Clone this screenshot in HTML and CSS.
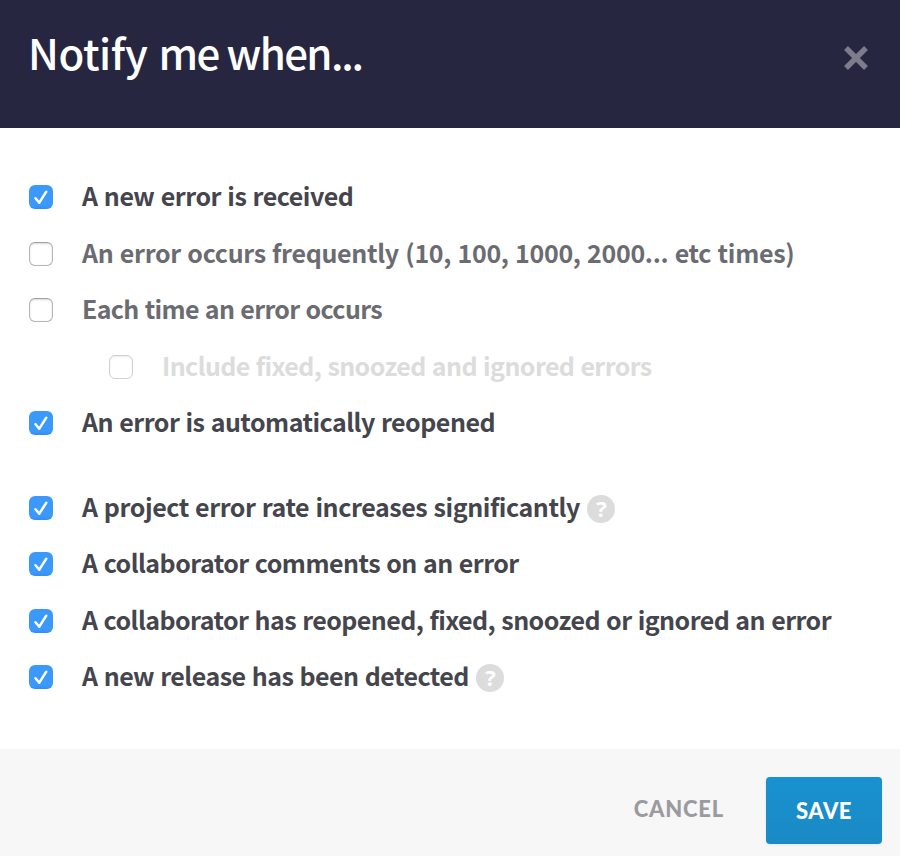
FILE: index.html
```html
<!DOCTYPE html>
<html lang="en">
<head>
<meta charset="utf-8">
<title>Notification settings</title>
<link rel="stylesheet" href="styles.css">
</head>
<body>
<svg class="defs" width="0" height="0" aria-hidden="true">
  <symbol id="tick" viewBox="0 0 24 24"><path d="M6.5 13.2 10.3 17.7 17.3 6.7" fill="none" stroke="#fff" stroke-width="2.5" stroke-linecap="round" stroke-linejoin="round"/></symbol>
</svg>
<div class="modal">
  <header class="header">
    <h1 class="title"><span class="lead">Notify </span>me when<span class="dots">...</span></h1>
    <svg class="close" viewBox="0 0 26 26"><path d="M3 3 23 23M23 3 3 23" fill="none" stroke="#7d7c8a" stroke-width="5.4"/></svg>
  </header>
  <main class="options">
    <label class="row on"><span class="box"><svg><use href="#tick"/></svg></span><span class="text t1">A new error is received</span></label>
    <label class="row"><span class="box"></span><span class="text t2">An error occurs frequently (10, 100, 1000, 2000... etc times)</span></label>
    <label class="row"><span class="box"></span><span class="text t3">Each time an error occurs</span></label>
    <label class="row sub"><span class="box"></span><span class="text t4">Include fixed, snoozed and ignored errors</span></label>
    <label class="row on"><span class="box"><svg><use href="#tick"/></svg></span><span class="text t5">An error is automatically reopened</span></label>
    <label class="row on group"><span class="box"><svg><use href="#tick"/></svg></span><span class="text t6">A project error rate increases significantly</span><span class="help">?</span></label>
    <label class="row on"><span class="box"><svg><use href="#tick"/></svg></span><span class="text t7">A collaborator comments on an error</span></label>
    <label class="row on"><span class="box"><svg><use href="#tick"/></svg></span><span class="text t8">A collaborator has reopened, fixed, snoozed or ignored an error</span></label>
    <label class="row on"><span class="box"><svg><use href="#tick"/></svg></span><span class="text t9">A new release has been detected</span><span class="help">?</span></label>
  </main>
  <footer class="footer">
    <span class="cancel">CANCEL</span>
    <span class="save">SAVE</span>
  </footer>
</div>
</body>
</html>
```
FILE: styles.css
```css
* { box-sizing: border-box; }
body { margin: 0; font-family: "Noto Sans CJK SC", "Open Sans", sans-serif; background: #fff; }
.defs { position: absolute; }
.modal { width: 900px; height: 856px; display: flex; flex-direction: column; overflow: hidden; }
.header { height: 128px; background: #272641; display: flex; justify-content: space-between; padding: 21px 31px 0 28px; }
.title { margin: 0; font-size: 42px; line-height: 62px; font-weight: 500; letter-spacing: -1.6px; color: #fff; white-space: nowrap; }
.lead { letter-spacing: -.4px; word-spacing: 2px; }
.dots { letter-spacing: -2.2px; }
.close { width: 26px; height: 26px; margin-top: 24px; }
.options { height: 621px; padding: 40.75px 29px 0; }
.row { height: 56.5px; display: flex; align-items: center; color: #6b6b72; }
.row.on { color: #45454d; }
.row.sub { padding-left: 80px; color: #dcdcdc; }
.row.group { margin-top: 28.25px; }
.box { width: 24px; height: 24px; flex: none; border: 1px solid #b5b5b5; border-top-color: #a0a0a0; border-radius: 6px; background: #fff; box-shadow: inset 0 1px 2px rgba(0,0,0,.15); margin-right: 29px; }
.on .box { border: 0; background: linear-gradient(#3b99fc 85%, #348df0); box-shadow: none; }
.sub .box { border-color: #d0d0d0; box-shadow: inset 0 1px 2px rgba(0,0,0,.07); }
.box svg { display: block; width: 24px; height: 24px; }
.text { font-size: 25px; line-height: 36px; font-weight: 700; word-spacing: 1px; white-space: nowrap; margin-bottom: 4px; }
.t1 { letter-spacing: -.45px; }
.t2 { letter-spacing: -.3px; }
.t3 { letter-spacing: -.66px; }
.t4 { letter-spacing: -.59px; }
.t5 { letter-spacing: -.5px; }
.t6 { letter-spacing: -.42px; }
.t7 { letter-spacing: -.53px; }
.t8 { letter-spacing: -.55px; }
.t9 { letter-spacing: -.52px; }
.help { width: 28px; height: 28px; border-radius: 50%; background: #dcdcdc; color: #fff; font: 700 22px/26px "Open Sans", sans-serif; text-align: center; margin: 2px 0 0 7.5px; }
.footer { flex: 1; background: #f7f7f7; display: flex; justify-content: flex-end; align-items: flex-start; padding: 28px 18px 0; font-family: Lato, sans-serif; font-size: 22px; font-weight: 900; }
.cancel { color: #9b9b9f; line-height: 63px; letter-spacing: .8px; margin-right: 42px; }
.save { width: 116px; height: 67px; border-radius: 4px; background: linear-gradient(#1991d0, #1a8ac5); color: #fff; line-height: 67px; letter-spacing: .5px; text-align: center; box-shadow: 0 1px 3px rgba(0,0,0,.08); }
```
